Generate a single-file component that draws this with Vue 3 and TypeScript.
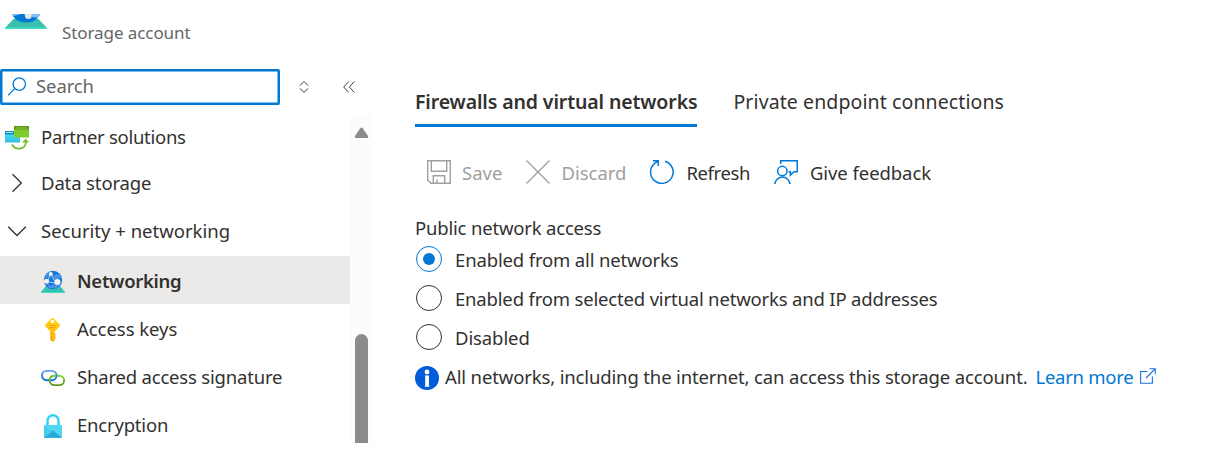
<script setup lang="ts">
import { ref } from 'vue'

type NavIcon = 'partner' | 'right' | 'down' | 'network' | 'key' | 'link' | 'lock'
interface NavItem { label: string; icon: NavIcon; cls: string; child?: boolean; active?: boolean }

const nav: NavItem[] = [
  { label: 'Partner solutions', icon: 'partner', cls: 't-partner' },
  { label: 'Data storage', icon: 'right', cls: 't-data' },
  { label: 'Security + networking', icon: 'down', cls: 't-security' },
  { label: 'Networking', icon: 'network', cls: 't-networking', child: true, active: true },
  { label: 'Access keys', icon: 'key', cls: 't-keys', child: true },
  { label: 'Shared access signature', icon: 'link', cls: 't-sas', child: true },
  { label: 'Encryption', icon: 'lock', cls: 't-encryption', child: true },
]
const options = [
  { label: 'Enabled from all networks', cls: 't-all' },
  { label: 'Enabled from selected virtual networks and IP addresses', cls: 't-selected' },
  { label: 'Disabled', cls: 't-disabled' },
]
const selected = ref(0)
</script>

<template>
  <div class="page">
    <header class="header">
      <svg class="logo" width="42" height="16" viewBox="0 0 42 16">
        <path d="M8.500 5h25L42 14v1H0v-1z" fill="#3bc0b0" />
        <path d="M0 13.500h42V15H0z" fill="#40e0c3" />
        <path d="M7 0h28c-2 5-7 8.500-14 8.500S9 5 7 0z" fill="#0078d4" />
        <path d="M7 0h9l-6 1.800H8zM27 0h8q-.8 2.200-2.300 3.800L26.500 3z" fill="#83b9f9" />
        <path d="M19.800 0h7q.5 5-3.500 5t-3.500-5z" fill="#e6e6e6" />
      </svg>
      <span class="t t-storage">Storage account</span>
    </header>
    <div class="body">
      <aside class="side">
        <div class="tools">
          <div class="search">
            <svg width="20" height="20" viewBox="0 0 20 20" fill="none" stroke="#0078d4" stroke-width="1.300"><circle cx="11.300" cy="7.100" r="6.200" /><path d="M6.800 11.600.2 18.200" /></svg>
            <span class="t t-search">Search</span>
          </div>
          <svg class="sort" width="10" height="12" viewBox="0 0 10 12" fill="none" stroke="#444" stroke-width="1"><path d="M.7 4.700 5 .6l4.300 4.100M.7 7.300 5 11.400l4.300-4.100" /></svg>
          <svg class="collapse" width="12" height="12" viewBox="0 0 12 12" fill="none" stroke="#444" stroke-width="1"><path d="M5.700.5.700 6l5 5.500M11.300.5l-5 5.500 5 5.500" /></svg>
        </div>
        <div class="list">
          <nav class="nav">
            <div v-for="n in nav" :key="n.label" class="row" :class="{ child: n.child, active: n.active }">
              <svg v-if="n.icon === 'partner'" class="ic" width="24" height="24" viewBox="0 0 24 24">
                <defs><linearGradient id="pb" x1="0" y1="1" x2="0" y2="0"><stop offset="0" stop-color="#32bedd" /><stop offset="1" stop-color="#50e6ff" /></linearGradient></defs>
                <path d="M0 5h15v11.500H0z" fill="url(#pb)" /><path d="M0 5h15v3.500H0z" fill="#198ab3" /><path d="M1 6.500h7" stroke="#9be8f8" />
                <path d="M9 0h15v11.500H9z" fill="#7fcb2d" /><path d="M9 0h15v3.500H9z" fill="#5e9624" /><path d="M11 2h11" stroke="#8ed02f" />
                <path d="M7 18.500c3 6 14 6 14-3.500" fill="none" stroke="#76bc2d" stroke-width="1.700" /><path d="m17 16.500 3.800-4 3.200 4z" fill="#76bc2d" />
              </svg>
              <svg v-else-if="n.icon === 'right'" class="chev" width="24" height="24" viewBox="0 0 24 24" fill="none" stroke="#323130" stroke-width="1.300"><path d="m7.500 3.200 8.800 8.800-8.800 8.800" /></svg>
              <svg v-else-if="n.icon === 'down'" class="chev" width="24" height="24" viewBox="0 0 24 24" fill="none" stroke="#323130" stroke-width="1.300"><path d="m3.200 7.700 8.800 8.800 8.800-8.800" /></svg>
              <svg v-else-if="n.icon === 'network'" class="ic" width="24" height="24" viewBox="0 0 24 24">
                <path d="M5 16h14l5 6v1H0v-1z" fill="#37c2b1" /><path d="M0 22.200h24V23H0z" fill="#45e0c5" />
                <circle cx="12" cy="10" r="9.200" fill="#1878d8" />
                <path d="M5 4.200 10 1.200l-1 4-4 3zM12 5.700l7-2 1.500 3-6 4zM5 12.700l5 3 5-3 4 2-4 4-7-1z" fill="#4793e8" />
                <path d="M10 4.200 6 11.700l9 1.500L9.800 4" fill="none" stroke="#a9cff8" stroke-width="1" />
                <circle cx="9.800" cy="4" r="2" fill="#f2f2f2" /><circle cx="5.500" cy="11.200" r="2.500" fill="#f2f2f2" /><circle cx="16.500" cy="12" r="3" fill="#f2f2f2" />
              </svg>
              <svg v-else-if="n.icon === 'key'" class="ic" width="24" height="24" viewBox="0 0 24 24">
                <defs><linearGradient id="kg" x1="0" y1="0" x2="0" y2="1"><stop offset="0" stop-color="#ffd70f" /><stop offset="1" stop-color="#feb115" /></linearGradient></defs>
                <path fill-rule="evenodd" d="M10.300.6q1.200-1 2.400 0l5.800 5.700q1 1 0 2.200l-4.600 4.800v2.200l1.200 1.200-1.400 1.400 1.400 1.400-1.200 1.500v1.200L11.500 24l-2.400-2.300v-8.400L4.500 8.500q-1-1.200 0-2.200zM11.500 1.800a1.700 1.700 0 1 0 0 3.400 1.700 1.700 0 0 0 0-3.400z" fill="url(#kg)" />
                <path d="M8 7.500h7M8 9.500h7" stroke="#f5a318" /><path d="M11 14v7" stroke="#fba019" />
              </svg>
              <svg v-else-if="n.icon === 'link'" class="ic" width="24" height="24" viewBox="0 0 24 24" fill="none" stroke-width="1.900">
                <defs><linearGradient id="lb" x1="0" y1="0" x2="0" y2="1"><stop offset="0" stop-color="#5ea0ef" /><stop offset="1" stop-color="#0078d4" /></linearGradient><linearGradient id="lg" x1="0" y1="0" x2="0" y2="1"><stop offset="0" stop-color="#86d633" /><stop offset="1" stop-color="#5e9624" /></linearGradient></defs>
                <rect x="8.700" y="9.700" width="14.400" height="9.400" rx="4.700" stroke="url(#lg)" /><rect x="1" y="4.900" width="14.500" height="9.400" rx="4.700" stroke="url(#lb)" /><path d="M9 15q-1-4 3-5.300" stroke="#76bc2d" />
              </svg>
              <svg v-else class="ic" width="24" height="24" viewBox="0 0 24 24">
                <path d="M6.500 12V6.800a5.500 5.500 0 0 1 11 0V12" fill="none" stroke="#32d4f5" stroke-width="2.500" />
                <rect x="3" y="11" width="18" height="13" rx=".8" fill="#50d8f2" /><path d="m3.200 23.800 8.800-7.300 8.800 7.300z" fill="#28a9d0" /><path d="m3 11.500 9 7.500-8.500 5-.5-.5z" fill="#35bfe0" opacity=".4" />
              </svg>
              <span class="t" :class="n.cls">{{ n.label }}</span>
            </div>
          </nav>
          <div class="scroll">
            <svg width="15" height="12" viewBox="0 0 15 12"><path d="M6.300 1.200q1.200-1.600 2.400 0l5.300 7.800q.9 2-1 2H2q-1.900 0-1-2z" fill="#8b8b8b" /></svg>
            <div class="thumb"></div>
          </div>
        </div>
      </aside>
      <main class="main">
        <div class="tabs"><div class="tab on"><span class="t t-fire">Firewalls and virtual networks</span></div><div class="tab"><span class="t t-private">Private endpoint connections</span></div></div>
        <div class="cmds">
          <button class="cmd off c1"><svg width="24" height="24" viewBox="0 0 24 24" fill="none" stroke="#a19f9d" stroke-width="1.400"><path d="M.7.700h22.600v22.600H4L.7 20zM4.300.7v10.600h15.400V.7M6.300 23.300v-7.600h11.400v7.600M10 19.500v3.800" /></svg><span class="t t-save">Save</span></button>
          <button class="cmd off c2"><svg width="24" height="24" viewBox="0 0 24 24" fill="none" stroke="#a19f9d" stroke-width="1.400"><path d="m.5.5 23 23M23.500.5l-23 23" /></svg><span class="t t-discard">Discard</span></button>
          <button class="cmd c3"><svg width="25" height="24" viewBox="0 0 25 24" fill="none" stroke="#0078d4" stroke-width="1.500"><path d="M16 1.200A11.300 11.300 0 1 1 5.600 3.400L9.300.9M4 .8h5.300v5.200" /></svg><span class="t t-refresh">Refresh</span></button>
          <button class="cmd c4"><svg width="25" height="24" viewBox="0 0 25 24" fill="none" stroke="#0078d4" stroke-width="1.500"><path d="M6.700 4V.8h16.500v11h-3.300l-3.500 3.400v-3.400h-2" /><circle cx="8.300" cy="11" r="4.700" /><path d="M.8 24a7.700 8.300 0 0 1 15.200 0" /></svg><span class="t t-feedback">Give feedback</span></button>
        </div>
        <div class="field"><span class="t t-public">Public network access</span></div>
        <div v-for="(o, i) in options" :key="o.label" class="opt" @click="selected = i">
          <span class="radio" :class="{ sel: selected === i }"></span><span class="t" :class="o.cls">{{ o.label }}</span>
        </div>
        <div class="info">
          <svg class="badge" width="24" height="24" viewBox="0 0 24 24"><circle cx="12" cy="12" r="12" fill="#015cda" /><circle cx="12" cy="6" r="2.400" fill="#fff" /><path d="M10 9.500h4V20h.5v.8H9.700V20h.5v-9.500H10z" fill="#fff" /></svg>
          <span class="t t-info">All networks, including the internet, can access this storage account.</span>
          <a class="t t-learn">Learn more</a>
          <svg class="ext" width="16" height="16" viewBox="0 0 16 16" fill="none" stroke="#1b6fe0" stroke-width="1.100"><path d="M7.500 3.500H.6v11.800h11.800V8.500M6 10 15 1M9.500.7h5.800v5.800" /></svg>
        </div>
      </main>
    </div>
  </div>
</template>

<style>
body { background: #fff; }
</style>
<style scoped>
.page { height: 459px; overflow: hidden; font-family: "Noto Sans", "Open Sans", sans-serif; font-size: 18.5px; color: #323130; }
.page svg { display: block; flex: none; }
.t { white-space: nowrap; }
.header { height: 69px; display: flex; align-items: flex-start; }
.logo { margin: 14px 15px 0 5px; }
.t-storage { margin-top: 21px; line-height: 24px; font-size: 17px; letter-spacing: -.08px; color: #666; }
.body { display: flex; height: 390px; }
.side { width: 373px; flex: none; }
.tools { height: 36px; display: flex; align-items: center; }
.search { box-sizing: border-box; width: 280px; height: 36px; border: 2px solid #0078d4; box-shadow: inset 0 0 0 .5px #0078d4; border-radius: 2px; padding: 0 0 0 6px; display: flex; align-items: center; color: #666; }
.t-search { margin-left: 8px; padding-bottom: 3px; letter-spacing: -.1px; }
.sort { margin-left: 19px; }
.collapse { margin-left: 34px; }
.list { margin-top: 10px; height: 328px; display: flex; overflow: hidden; }
.nav { width: 350px; margin-top: -3px; }
.row { box-sizing: border-box; height: 48px; padding-left: 5px; display: flex; align-items: center; gap: 12px; }
.row .t { padding-top: 1px; }
.row .t-data, .row .t-security { padding: 0 0 3px; }
.ic { margin-top: 4px; }
.chev { margin-bottom: 2px; }
.t-partner { letter-spacing: -.28px; }
.t-data { letter-spacing: -.13px; }
.t-networking { letter-spacing: -.3px; }
.t-keys { letter-spacing: -.05px; }
.t-sas { letter-spacing: -.19px; }
.t-encryption { letter-spacing: -.2px; }
.child { padding-left: 41px; }
.active { background: #ebeae9; font-weight: 600; }
.scroll { width: 23px; background: #fcfcfc; padding: 12px 0 0 4px; box-sizing: border-box; }
.thumb { width: 13px; height: 120px; margin: 195px 0 0 1px; background: #8b8b8b; border-radius: 6.500px; }
.main { padding-left: 42px; flex: 1; }
.tabs { display: flex; gap: 36px; padding-top: 15px; font-size: 19.500px; }
.tab { height: 40px; line-height: 35px; border-bottom: 3px solid transparent; }
.on { font-weight: 600; border-color: #0078d4; }
.t-fire { letter-spacing: -.12px; }
.t-private { letter-spacing: .1px; }
.cmds { display: flex; padding: 29px 0 0 12px; height: 32px; }
.cmd { border: 0; padding: 0; background: none; font: inherit; color: inherit; display: flex; align-items: center; gap: 11px; height: 32px; }
.off { color: #a19f9d; }
.c2, .c4 { margin-left: 24px; }
.c3 { margin-left: 23px; gap: 12px; }
.t-refresh { letter-spacing: -.4px; }
.t-feedback { letter-spacing: -.07px; }
.field { margin-top: 28px; line-height: 24px; margin-bottom: -1px; }
.opt { height: 39px; display: flex; align-items: center; gap: 13px; }
.opt .t { padding-top: 2px; }
.radio { box-sizing: border-box; width: 26px; height: 26px; border: 1.300px solid #323130; border-radius: 50%; margin-left: 1px; display: grid; place-items: center; }
.sel { border-color: #0078d4; }
.sel::after { content: ""; width: 12px; height: 12px; border-radius: 50%; background: #0078d4; }
.t-public { letter-spacing: -.19px; }
.t-all { letter-spacing: -.15px; }
.t-selected { letter-spacing: -.175px; }
.t-disabled { letter-spacing: -.1px; }
.info { display: flex; align-items: center; height: 40px; }
.badge { margin-top: 3px; }
.t-info { margin-left: 6px; letter-spacing: -.14px; }
.t-learn { color: #0078d4; margin-left: 8px; letter-spacing: -.27px; }
.ext { margin-left: 7px; }
</style>
